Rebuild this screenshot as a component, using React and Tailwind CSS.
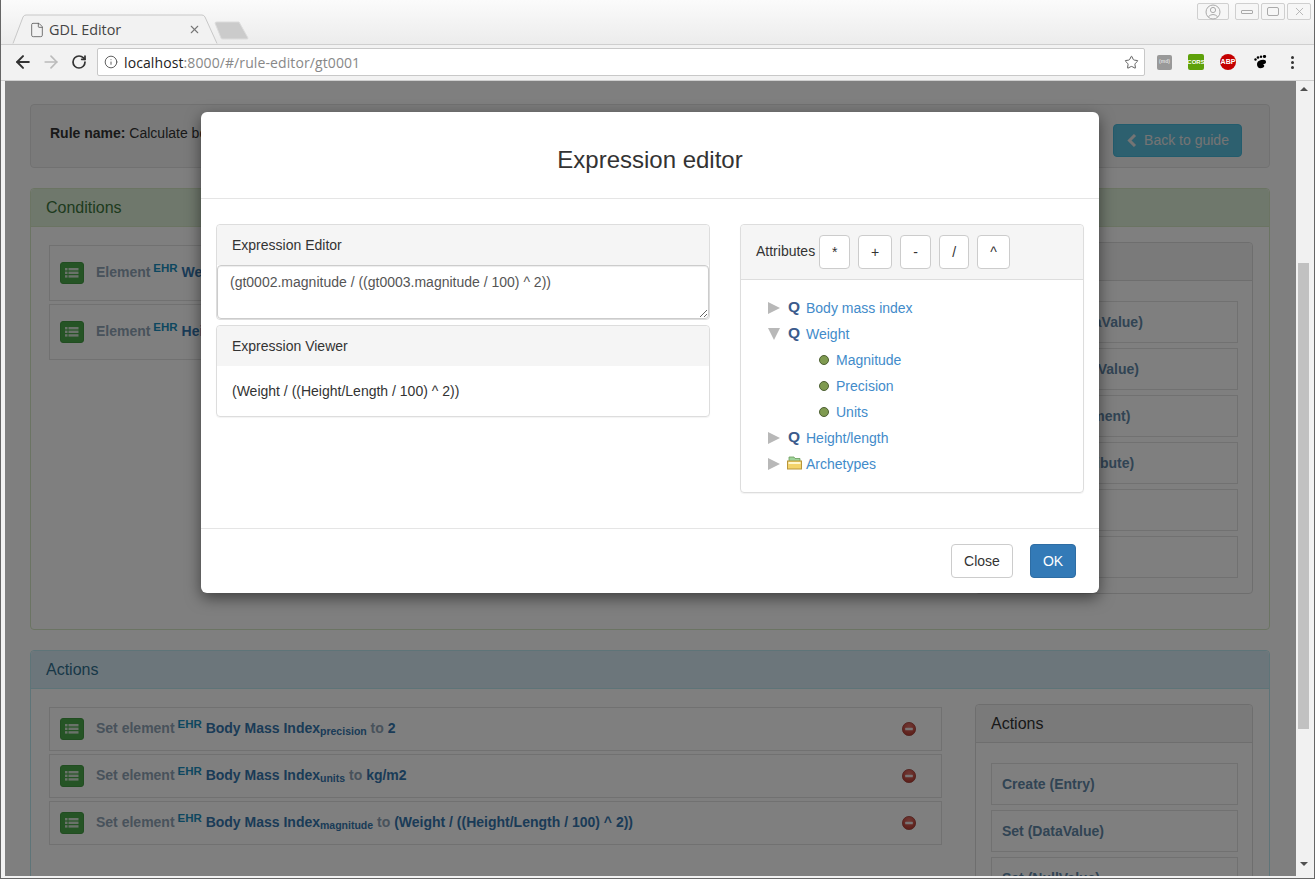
import React from "react";
import { ArrowLeft, ArrowRight, RotateCw, Info, Star, X, File } from "lucide-react";

const F = { fontFamily: '"Liberation Sans", Arial, sans-serif' };

function ListIcon() {
  return (
    <svg width="14" height="12" viewBox="0 0 14 12" fill="#d4e4d4">
      <rect x="0" y="1" width="2.5" height="2.4" /><rect x="3.5" y="1" width="10" height="2.4" />
      <rect x="0" y="4.6" width="2.5" height="2.4" /><rect x="3.5" y="4.6" width="10" height="2.4" />
      <rect x="0" y="8.2" width="2.5" height="2.4" /><rect x="3.5" y="8.2" width="10" height="2.4" />
    </svg>
  );
}

function GreenBtn() {
  return (
    <span className="flex h-[22px] w-[24px] shrink-0 items-center justify-center rounded-[3px] bg-[#4aa84a] border border-[#429a42]">
      <ListIcon />
    </span>
  );
}

function RemoveIcon() {
  return (
    <svg width="14" height="14" viewBox="0 0 14 14" className="shrink-0">
      <defs>
        <radialGradient id="rg" cx="50%" cy="30%" r="70%">
          <stop offset="0" stopColor="#e07068" /><stop offset="1" stopColor="#b83c30" />
        </radialGradient>
      </defs>
      <circle cx="7" cy="7" r="6.6" fill="url(#rg)" stroke="#a04038" strokeWidth="0.8" />
      <rect x="3.2" y="5.8" width="7.6" height="2.4" rx="0.5" fill="#f0e8e8" />
    </svg>
  );
}

function Ehr() {
  return <sup className="relative top-[1px] ml-[-1px] align-super text-[11.5px] font-bold leading-none text-[#1a8fc0]">EHR</sup>;
}

function Rule({ lead, name, sub, tail, value, height, remove }) {
  return (
    <div className={`flex items-center border border-[#e3e3e3] pl-[10px] pr-[25px] ${height}`}>
      <GreenBtn />
      <div className="mb-[2px] ml-[12px] flex-1 whitespace-nowrap text-[14px] font-bold text-[#90a4b6]">
        {lead} <Ehr /> <span className="text-[#3576ae]">{name}{sub && <sub className="relative top-[-1px] align-sub text-[10.5px] leading-none">{sub}</sub>}</span>
        {tail && <> <span>{tail}</span> <span className="text-[#3576ae]">{value}</span></>}
      </div>
      {remove && <RemoveIcon />}
    </div>
  );
}

function Tool({ label }) {
  return (
    <div className="flex h-[42px] items-center border border-[#e3e3e3] px-[10px] text-[14px] font-bold text-[#6288a8]">
      {label}
    </div>
  );
}

function ToolPanel({ items }) {
  return (
    <div className="w-[278px] shrink-0 rounded-[4px] border border-[#ddd]">
      <div className="flex h-[38px] items-center rounded-t-[4px] border-b border-[#ddd] bg-[#f5f5f5] px-[15px] text-[16px] text-[#333]">Actions</div>
      <div className="flex flex-col gap-[5px] pl-[15px] pr-[14px] pt-[20px] pb-[15px]">
        {items.map((t, i) => <Tool key={i} label={t} />)}
      </div>
    </div>
  );
}

function Page() {
  return (
    <div className="h-full w-full bg-white pl-[25px] pr-[26px] pt-[23px]" style={F}>
      <div className="flex h-[64px] items-start justify-between rounded-[4px] border border-[#e3e3e3] bg-[#f5f5f5] pl-[19px] pr-[27px] pt-[18px] text-[14px] text-[#333]">
        <div><b>Rule name:</b> Calculate body mass index</div>
        <div className="mt-[1px] flex h-[33px] w-[129px] items-center justify-center gap-[7px] rounded-[4px] border border-[#46b8da] bg-[#5bc0de] pl-[1px] text-[#e8e8e8]">
          <svg width="10" height="13" viewBox="0 0 10 13"><path d="M8 1 L2.5 6.5 L8 12" fill="none" stroke="#e8e8e8" strokeWidth="3" /></svg>
          Back to guide
        </div>
      </div>

      <div className="mt-[20px] h-[442px] rounded-[4px] border border-[#d6e9c6]">
        <div className="flex h-[38px] items-center rounded-t-[4px] border-b border-[#d6e9c6] bg-[#dff0d8] px-[15px] text-[16px] text-[#3c763d]">Conditions</div>
        <div className="flex pl-[18px] pr-[16px] pt-[15px]">
          <div className="flex w-[893px] shrink-0 flex-col gap-[3px] pt-[3px]">
            <Rule lead="Element" name="Weight" height="h-[56px]" />
            <Rule lead="Element" name="Height/Length" height="h-[56px]" />
          </div>
          <div className="ml-[33px]">
            <ToolPanel items={["Compare (DataValue)", "Compare (NullValue)", "Compare (Element)", "Compare (Attribute)", "Exists", "Not exists"]} />
          </div>
        </div>
      </div>

      <div className="mt-[20px] rounded-t-[4px] border border-[#bce8f1]">
        <div className="flex h-[38px] items-center rounded-t-[4px] border-b border-[#bce8f1] bg-[#d9edf7] px-[15px] text-[16px] text-[#31708f]">Actions</div>
        <div className="flex pl-[18px] pr-[16px] pt-[15px]">
          <div className="flex w-[893px] shrink-0 flex-col gap-[3px] pt-[3px]">
            <Rule lead="Set element" name="Body Mass Index" sub="precision" tail="to" value="2" height="h-[44px]" remove />
            <Rule lead="Set element" name="Body Mass Index" sub="units" tail="to" value="kg/m2" height="h-[44px]" remove />
            <Rule lead="Set element" name="Body Mass Index" sub="magnitude" tail="to" value="(Weight / ((Height/Length / 100) ^ 2))" height="h-[44px]" remove />
          </div>
          <div className="ml-[33px]">
            <ToolPanel items={["Create (Entry)", "Set (DataValue)", "Set (NullValue)"]} />
          </div>
        </div>
      </div>
    </div>
  );
}

function Caret({ open }) {
  return (
    <svg width="12" height="12" viewBox="0 0 12 12" className="shrink-0">
      {open ? <path d="M0 0 H12 L6 12 Z" fill="#b8b8b8" /> : <path d="M0 0 L12 6 L0 12 Z" fill="#b8b8b8" />}
    </svg>
  );
}

function Quant() {
  return <span className="mb-[2px] w-[18px] shrink-0 text-[15.5px] font-bold leading-none text-[#3b5b8c]">Q</span>;
}

function Folder() {
  return (
    <svg width="15" height="14" viewBox="0 0 15 14" className="ml-[-1px] mb-[2px] mr-[4px] shrink-0">
      <path d="M2 1 H7 L8 2.5 H13 V6 H2 Z" fill="#9fd49a" stroke="#6a9a5a" strokeWidth="0.8" />
      <rect x="0.5" y="5" width="14" height="8" fill="#f3d36a" stroke="#b8953a" />
      <rect x="1.5" y="6" width="12" height="2" fill="#fff6cc" />
    </svg>
  );
}

function Node({ icon, label, open }) {
  return (
    <div className="flex h-[26px] items-center pl-[27px]">
      <Caret open={open} />
      <span className="w-[8px] shrink-0" />
      {icon}
      <span className="text-[#428bca]">{label}</span>
    </div>
  );
}

function Leaf({ label }) {
  return (
    <div className="flex h-[26px] items-center pl-[78px]">
      <span className="mb-[1px] mr-[7px] h-[10px] w-[10px] rounded-full border border-[#4d5f33] bg-[#7f9a50]" />
      <span className="text-[#428bca]">{label}</span>
    </div>
  );
}

const OPS = [
  { c: "*", w: "w-[31px]" },
  { c: "+", w: "w-[34px]" },
  { c: "-", w: "w-[31px]" },
  { c: "/", w: "w-[30px]" },
  { c: "^", w: "w-[33px]" },
];

function OpBtn({ c, w }) {
  return (
    <span className={`inline-flex h-[34px] items-center justify-center rounded-[4px] border border-[#ccc] bg-white text-[14px] text-[#333] ${w}`}>{c}</span>
  );
}

function Modal() {
  return (
    <div className="absolute left-[201px] top-[112px] h-[481px] w-[898px] rounded-[6px] bg-white text-[14px] text-[#333] shadow-[0_5px_15px_rgba(0,0,0,0.5)]" style={F}>
      <div className="flex h-[87px] items-center justify-center border-b border-[#e5e5e5] pt-[9px] text-[24px]">Expression editor</div>
      <div className="flex h-[329px] items-start gap-[30px] px-[15px] pt-[25px]">
        <div className="flex w-[494px] shrink-0 flex-col gap-[5px]">
          <div className="rounded-[4px] border border-[#ddd]">
            <div className="flex h-[40px] items-center rounded-t-[4px] bg-[#f5f5f5] px-[15px]">Expression Editor</div>
            <textarea
              readOnly
              value="(gt0002.magnitude / ((gt0003.magnitude / 100) ^ 2))"
              className="block h-[54px] w-full rounded-[4px] border border-[#ccc] px-[12px] py-[6px] text-[14px] leading-[20px] text-[#555] shadow-[inset_0_1px_1px_rgba(0,0,0,0.075)] outline-none"
              style={{ resize: "vertical" }}
            />
          </div>
          <div className="rounded-[4px] border border-[#ddd] shadow-[0_1px_1px_rgba(0,0,0,0.05)]">
            <div className="flex h-[40px] items-center rounded-t-[4px] bg-[#f5f5f5] px-[15px]">Expression Viewer</div>
            <div className="px-[15px] py-[15px] leading-[20px]">(Weight / ((Height/Length / 100) ^ 2))</div>
          </div>
        </div>
        <div className="h-[269px] w-[344px] shrink-0 rounded-[4px] border border-[#ddd] shadow-[0_1px_1px_rgba(0,0,0,0.05)]">
          <div className="flex h-[55px] items-center gap-[8px] rounded-t-[4px] border-b border-[#ddd] bg-[#f5f5f5] px-[15px]">
            <span className="mb-[2px] mr-[-4px]">Attributes</span>
            {OPS.map((o) => <OpBtn key={o.c} c={o.c} w={o.w} />)}
          </div>
          <div className="pt-[15px]">
            <Node icon={<Quant />} label="Body mass index" />
            <Node icon={<Quant />} label="Weight" open />
            <Leaf label="Magnitude" />
            <Leaf label="Precision" />
            <Leaf label="Units" />
            <Node icon={<Quant />} label="Height/length" />
            <Node icon={<Folder />} label="Archetypes" />
          </div>
        </div>
      </div>
      <div className="flex h-[65px] items-center justify-end gap-[17px] border-t border-[#e5e5e5] pr-[23px]">
        <span className="flex h-[34px] w-[62px] items-center justify-center rounded-[4px] border border-[#ccc] bg-white">Close</span>
        <span className="flex h-[34px] w-[46px] items-center justify-center rounded-[4px] border border-[#2e6da4] bg-[#337ab7] text-white">OK</span>
      </div>
    </div>
  );
}

function WinBtn({ w, children }) {
  return (
    <span className={`flex h-[17px] items-center justify-center rounded-[2px] border border-[#cfcfcf] bg-[#f6f6f6] ${w}`}>{children}</span>
  );
}

function TabStrip() {
  const C = '"Open Sans", sans-serif';
  return (
    <div className="relative h-[44px] shrink-0 bg-gradient-to-b from-[#fbfbfb] to-[#ececec]">
      <svg width="260" height="30" viewBox="0 0 260 30" className="absolute left-0 top-[14px]">
        <path d="M12 29.5 L22 3 Q23 1 25 1 L201 1 Q203 1 204 3 L216 29.5" fill="#f2f2f2" stroke="#c8c8c8" />
        <path d="M214 9 Q214 8 216 8 L238 8 L247 24 Q247 25 246 25 L222 25 Q220 25 220 24 Z" fill="#cbcbcb" stroke="#dcdcdc" />
      </svg>
      <div className="absolute left-[28px] top-[19px] flex w-[172px] items-center justify-between text-[14.4px] text-[#444]" style={{ fontFamily: C }}>
        <span className="flex items-center gap-[4px]">
          <File size={16} strokeWidth={1.2} color="#555" />
          GDL Editor
        </span>
        <X size={13} strokeWidth={2} color="#777" />
      </div>
      <div className="absolute right-[3px] top-[3px] flex gap-[2px]">
        <span className="mr-[4px] flex h-[17px] w-[32px] items-center justify-center rounded-[2px] border border-[#cfcfcf] bg-[#f6f6f6]">
          <svg width="16" height="16" viewBox="0 0 16 16" fill="none" stroke="#aaa"><circle cx="8" cy="8" r="7" /><circle cx="8" cy="6" r="2.6" /><path d="M3.5 12.5 Q8 8.5 12.5 12.5" /></svg>
        </span>
        <WinBtn w="w-[24px]"><span className="h-[4px] w-[12px] rounded-[1px] border border-[#aaa]" /></WinBtn>
        <WinBtn w="w-[24px]"><span className="h-[9px] w-[12px] rounded-[2px] border border-[#aaa]" /></WinBtn>
        <WinBtn w="w-[24px]"><X size={13} strokeWidth={1.5} color="#aaa" /></WinBtn>
      </div>
    </div>
  );
}

function Toolbar() {
  const C = '"Open Sans", sans-serif';
  return (
    <div className="flex h-[37px] shrink-0 items-center border-t border-b border-[#cfcfcf] bg-[#f2f2f2] pb-[1px] pl-[12px]">
      <ArrowLeft size={20} strokeWidth={2.4} color="#333" />
      <ArrowRight size={20} strokeWidth={2} color="#bbb" className="ml-[8px]" />
      <RotateCw size={16} strokeWidth={2.6} color="#333" className="ml-[10px]" />
      <div className="ml-[10px] flex h-[28px] w-[1048px] items-center rounded-[2px] border border-[#c8c8c8] bg-white pl-[6px] pr-[5px]">
        <Info size={14} strokeWidth={1.6} color="#555" />
        <span className="ml-[6px] flex-1 text-[14px] tracking-[0.1px] text-[#888]" style={{ fontFamily: C }}><span className="text-[#222]">localhost</span>:8000/#/rule-editor/gt0001</span>
        <Star size={15} strokeWidth={1.5} color="#555" />
      </div>
      <span className="ml-[12px] flex h-[15px] w-[15px] items-center justify-center rounded-[2px] bg-[#999] text-[5px] font-bold text-[#ddd]" style={F}>(md)</span>
      <span className="ml-[16px] flex h-[16px] w-[16px] items-center justify-center rounded-[2px] bg-[#5ea10a] text-[6px] font-bold text-white" style={F}>CORS</span>
      <span className="ml-[16px] flex h-[16px] w-[16px] items-center justify-center rounded-full bg-[#c40000] text-[7px] font-bold text-white" style={F}>ABP</span>
      <svg width="14" height="14" viewBox="0 0 14 14" className="ml-[18px]" fill="#000">
        <path d="M7 5 Q12 4 12 7 Q12 9 9 9 L10 10 Q11 12 8 13 Q3 14 3 9 Q3 6 7 5 Z" />
        <circle cx="1.5" cy="4.5" r="1.2" /><circle cx="4" cy="2.5" r="1.3" /><circle cx="7" cy="1.8" r="1.2" /><circle cx="10.5" cy="1.5" r="1.6" />
      </svg>
      <span className="ml-[23px] flex flex-col gap-[2px]">
        <i className="h-[3px] w-[3px] rounded-full bg-[#333]" /><i className="h-[3px] w-[3px] rounded-full bg-[#333]" /><i className="h-[3px] w-[3px] rounded-full bg-[#333]" />
      </span>
    </div>
  );
}

function Scrollbar() {
  return (
    <div className="flex w-[15px] shrink-0 flex-col items-center bg-[#f1f1f1] pt-[6px]">
      <span className="h-0 w-0 border-x-[4px] border-b-[4px] border-x-transparent border-b-[#505050]" />
      <span className="mt-[172px] h-[466px] w-[11px] shrink-0 bg-[#c1c1c1]" />
      <span className="mt-[133px] h-0 w-0 border-x-[4px] border-t-[4px] border-x-transparent border-t-[#505050]" />
    </div>
  );
}

export default function App() {
  return (
    <div className="relative flex h-[879px] w-[1315px] flex-col overflow-hidden bg-[#f2f2f2] px-[1px] shadow-[inset_0_0_0_1px_#666]">
      <TabStrip />
      <Toolbar />
      <div className="flex min-h-0 flex-1 pb-[3px] pl-[4px] pr-[3px]">
        <div className="relative min-w-0 flex-1 overflow-hidden">
          <Page />
          <div className="absolute inset-0 bg-[rgba(0,0,0,0.5)]" />
        </div>
        <Scrollbar />
      </div>
      <Modal />
    </div>
  );
}
